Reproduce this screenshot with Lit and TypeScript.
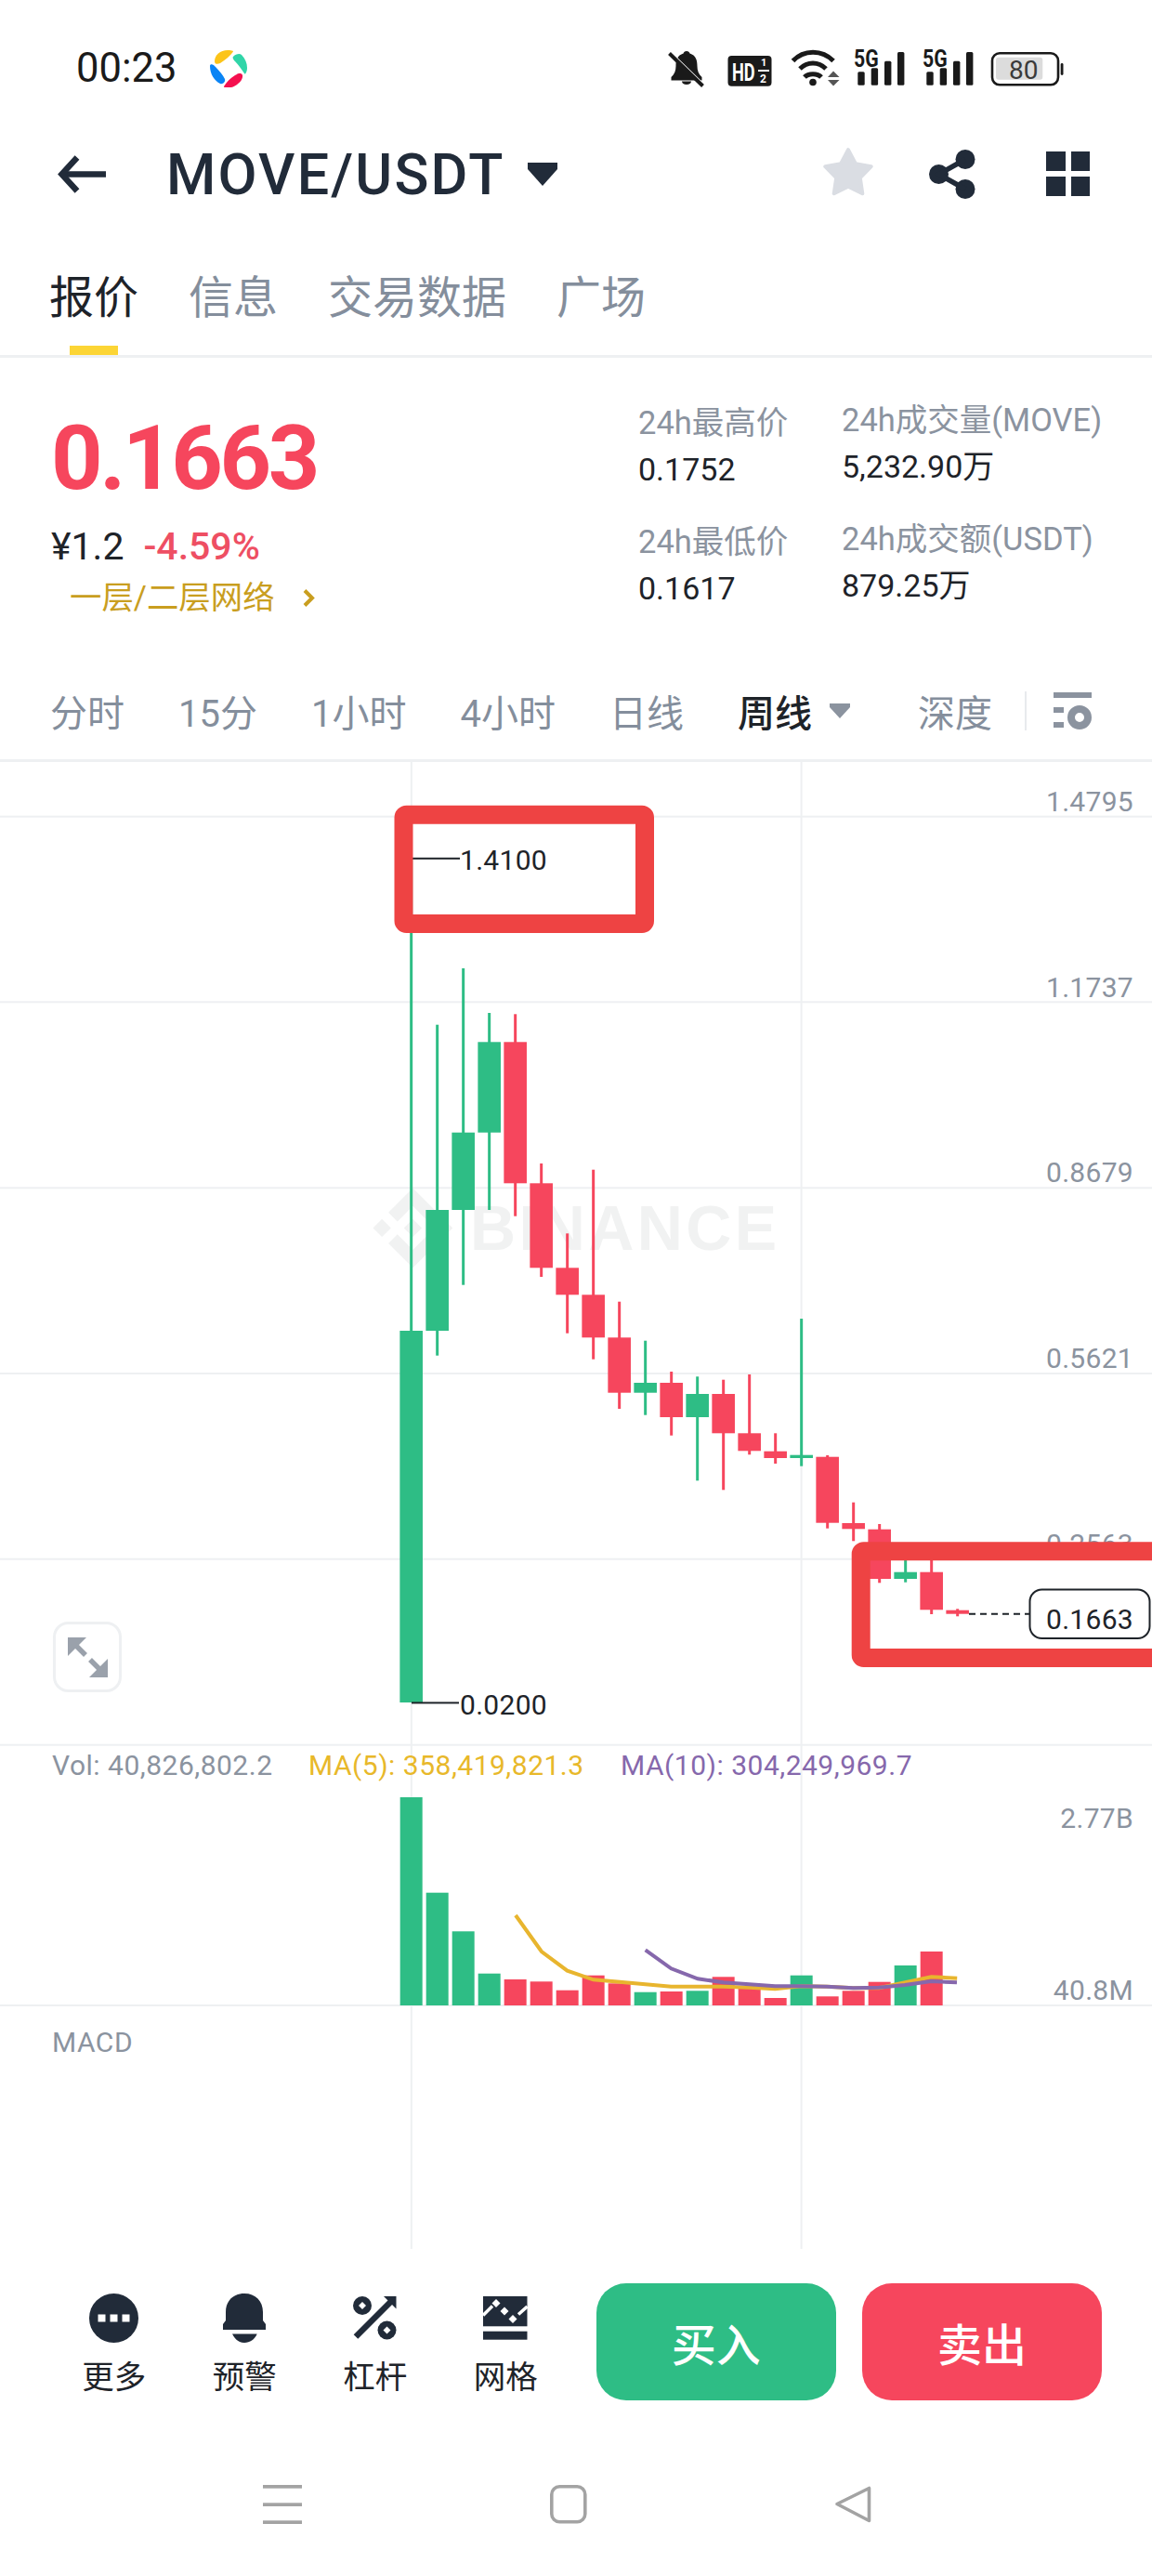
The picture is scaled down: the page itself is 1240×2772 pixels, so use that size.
import { LitElement, html, css, svg } from "lit";
import { customElement } from "lit/decorators.js";

const UP = "#2ebd85";
const DN = "#f6465d";
const GRID = "#eef0f2";
const INK = "#1e2329";

// [colour, high, low, bodyTop, bodyBottom]
const CANDLES: [string, number, number, number, number][] = [
  [UP, 924, 1832, 1432, 1832],
  [UP, 1102.7, 1458.7, 1302, 1432],
  [UP, 1042, 1382.7, 1218.7, 1302],
  [UP, 1090, 1302, 1121.3, 1218.7],
  [DN, 1091.3, 1308.7, 1121.3, 1273.3],
  [DN, 1252, 1374, 1273.3, 1364.3],
  [DN, 1327.3, 1434.7, 1364.3, 1393.3],
  [DN, 1258.7, 1462.7, 1393.3, 1439.3],
  [DN, 1400.7, 1516, 1439.3, 1498.7],
  [UP, 1442.7, 1522.7, 1488, 1498.7],
  [DN, 1476, 1544.7, 1488, 1525],
  [UP, 1481.3, 1593.3, 1500, 1525],
  [DN, 1484.7, 1603.3, 1500, 1542.3],
  [DN, 1479, 1565.3, 1542.3, 1561.3],
  [DN, 1542.3, 1575, 1561.7, 1569],
  [UP, 1419, 1577.7, 1565.7, 1569],
  [DN, 1566, 1644.7, 1567.7, 1638.7],
  [DN, 1616.7, 1658.3, 1639, 1645.3],
  [DN, 1640, 1703.3, 1645.7, 1699],
  [UP, 1676, 1702.7, 1691.7, 1699],
  [DN, 1676, 1737, 1691.7, 1732.3],
  [DN, 1731.3, 1739.3, 1732.7, 1736.7],
];

const VOLUMES: [string, number][] = [
  [UP, 1934], [UP, 2036.7], [UP, 2078.3], [UP, 2123.7], [DN, 2130], [DN, 2132.3], [DN, 2141.7],
  [DN, 2125.7], [DN, 2134.3], [UP, 2143.7], [DN, 2143], [UP, 2142.3], [DN, 2127.3], [DN, 2139.3],
  [DN, 2150], [UP, 2125.7], [DN, 2148.3], [DN, 2142.3], [DN, 2132.7], [UP, 2115], [DN, 2100],
];

const MA5 = "555,2061 582.9,2100 610.6,2120.7 638.8,2130.3 667,2132.7 694.7,2135.3 722.4,2137.7 751,2137.7 778.8,2137.7 806.5,2138.7 834.3,2140.3 862.4,2137.3 890.2,2137.7 918.4,2139.3 946.1,2139.3 974.3,2133.3 1002.4,2127.3 1030.2,2128.7";
const MA10 = "694.7,2098.3 722.4,2118.3 751,2129.3 778.8,2133.3 806.5,2135.3 834.3,2137.3 862.4,2137.3 890,2137.7 918.4,2139.3 946,2138.7 974,2136 1002.4,2132 1030,2133.3";

const HLINES = [878.7, 1078.3, 1278.3, 1478, 1677.7, 1877.7, 2158];
const AXIS: [string, number][] = [
  ["1.4795", 862], ["1.1737", 1062], ["0.8679", 1261], ["0.5621", 1461], ["0.2563", 1661],
  ["2.77B", 1956], ["40.8M", 2141],
];
const cx = (i: number) => 442.67 + 28 * i;

const starPoints = () => {
  const pts: string[] = [];
  for (let i = 0; i < 10; i++) {
    const r = i % 2 ? 13.5 : 26;
    const a = -Math.PI / 2 + (i * Math.PI) / 5;
    pts.push(`${(28 + r * Math.cos(a)).toFixed(1)},${(28.2 + r * Math.sin(a)).toFixed(1)}`);
  }
  return pts.join(" ");
};

@customElement("app-root")
export class AppRoot extends LitElement {
  static styles = css`
    :host {
      display: block;
      width: 1240px;
      height: 2772px;
      background: #fff;
      overflow: hidden;
      font-family: Roboto, "Noto Sans CJK SC", sans-serif;
      color: #1e2329;
    }
    svg { display: block; flex: none; }

    .status { height: 148px; display: flex; align-items: center; padding-left: 82px; }
    .time { font-size: 43.5px; color: #1a1a1a; line-height: 50px; width: 144px; }
    .status-icons { margin-left: 450px; }
    .s-white { font-family: Roboto, sans-serif; font-weight: 700; fill: #fff; }
    .s-dark { font-family: Roboto, sans-serif; font-weight: 700; fill: #1a1a1a; }
    .s-batt { font-family: Roboto, sans-serif; font-size: 28px; fill: #3a3a3a; }

    .header { height: 78px; display: flex; align-items: center; padding-left: 62px; }
    .title { font-size: 61px; font-weight: 500; line-height: 78px; letter-spacing: 2.2px; color: #212b39; margin-left: 65px; padding-top: 2px; width: 380px; }
    .caret { margin-left: 9px; }
    .star { margin-left: 285px; }
    .share { margin-left: 59px; }
    .apps { margin-left: 76px; display: grid; grid-template-columns: 20.7px 20.7px; grid-auto-rows: 20.7px; gap: 6px; }
    .apps i { background: #212b39; display: block; }

    .tabs { height: 159px; box-sizing: border-box; border-bottom: 3px solid #eef0f2; display: flex; gap: 54px; padding: 67px 0 0 53px; }
    .tab { display: flex; flex-direction: column; align-items: center; font-size: 48px; line-height: 56px; color: #848e9c; }
    .tab.on { color: #1e2329; }
    .mark { width: 52px; height: 10px; margin-top: 23px; }
    .tab.on .mark { background: #fcd535; }

    .stats { height: 331px; display: flex; }
    .left { width: 687px; box-sizing: border-box; padding: 58px 0 0 55px; }
    .price { font-size: 97px; line-height: 100px; font-weight: 700; color: #f6465d; letter-spacing: -3.4px; }
    .sub { display: flex; gap: 21px; margin-top: 21px; font-size: 41px; line-height: 48px; }
    .sub .pct { color: #ee4f63; font-weight: 500; }
    .net { display: flex; align-items: center; margin: 9px 0 0 20px; font-size: 34.4px; line-height: 44px; color: #c99e1f; }
    .net svg { margin-left: 29px; }
    .col { display: flex; flex-direction: column; }
    .col1 { width: 219px; padding-top: 47px; }
    .col2 { padding-top: 43.5px; }
    .lbl { font-size: 34.5px; line-height: 46px; color: #8b939f; white-space: nowrap; }
    .val { font-size: 34px; line-height: 44px; margin-top: 5px; color: #1e2329; white-space: nowrap; }
    .lbl.next { margin-top: 33px; }

    .ranges { height: 104px; box-sizing: border-box; border-bottom: 3px solid #eef0f2; display: flex; align-items: center; padding: 0 0 3px 54px; font-size: 40px; color: #848e9c; }
    .ranges span { margin-right: 58px; white-space: nowrap; }
    .ranges .on { color: #1e2329; font-weight: 500; margin-right: 19px; }
    .ranges .depth { margin: 0 0 0 73px; }
    .ranges .div { width: 2px; height: 42px; background: #e8eaed; margin: 0 29px 0 35px; }

    .axis { font-family: Roboto, sans-serif; font-size: 30px; letter-spacing: 0.3px; fill: #8b939f; text-anchor: end; dominant-baseline: central; }
    .mark-text { font-family: Roboto, sans-serif; font-size: 30px; letter-spacing: 0.3px; fill: #1e2329; dominant-baseline: central; }
    .legend { font-family: Roboto, sans-serif; font-size: 30px; letter-spacing: 0.5px; dominant-baseline: central; }
    .wm { font-family: "Liberation Sans", sans-serif; font-weight: 700; font-size: 68px; fill: #f1f2f2; }

    .footer { height: 200px; display: flex; box-sizing: border-box; padding: 36.7px 0 0 52.5px; }
    .tools { display: flex; width: 589px; }
    .tool { width: 140.5px; display: flex; flex-direction: column; align-items: center; padding-top: 11.5px; }
    .tool-icon { height: 53px; display: flex; align-items: center; justify-content: center; }
    .tool span { font-size: 34.5px; line-height: 44px; margin-top: 15px; color: #1e2329; }
    .btn { width: 258.6px; height: 126px; border-radius: 32px; color: #fff; font-size: 48px; font-weight: 500; display: flex; align-items: center; justify-content: center; }
    .buy { background: #2ebd85; }
    .sell { background: #f6465d; margin-left: 27.6px; }

    .nav { display: flex; padding: 54px 0 0 283px; gap: 266.5px; }
  `;

  private chart() {
    return html`<svg width="1240" height="1600" viewBox="0 820 1240 1600">
      ${HLINES.map((y) => svg`<rect x="0" y=${y - 1} width="1240" height="2" fill=${GRID}></rect>`)}
      <rect x="441.8" y="820" width="2" height="1600" fill=${GRID}></rect>
      <rect x="861.6" y="820" width="2" height="1600" fill=${GRID}></rect>

      <g fill="#f1f2f2" transform="translate(401.5 1278.5) scale(2.68)">
        <path d="M9.8 13.4 16 7.2l6.2 6.2 3.6-3.6L16 0 6.2 9.8l3.6 3.6zM0 16l3.6-3.6L7.2 16l-3.6 3.6L0 16zm9.8 2.6L16 24.8l6.2-6.2 3.6 3.6L16 32l-9.8-9.8 3.6-3.6zm15-2.6 3.6-3.6L32 16l-3.6 3.6-3.6-3.6zM19.6 16 16 12.4 12.4 16 16 19.6 19.6 16z"></path>
      </g>
      <text class="wm" x="506" y="1345" textLength="330">BINANCE</text>

      ${AXIS.map(([t, y]) => svg`<text class="axis" x="1220" y=${y}>${t}</text>`)}

      ${CANDLES.map(([c, hi, lo, top, bot], i) => svg`
        <rect x=${cx(i) - 1.5} y=${hi} width="3" height=${lo - hi} fill=${c}></rect>
        <rect x=${cx(i) - 12.3} y=${top} width="24.6" height=${bot - top} fill=${c}></rect>`)}

      <rect x="444" y="922.8" width="51" height="2" fill=${INK}></rect>
      <text class="mark-text" x="495" y="925.5">1.4100</text>
      <rect x="443" y="1831.4" width="51" height="2" fill=${INK}></rect>
      <text class="mark-text" x="495" y="1834.5">0.0200</text>

      <line x1="1043" y1="1736.7" x2="1108" y2="1736.7" stroke=${INK} stroke-width="2" stroke-dasharray="7 5"></line>
      <rect x="1108.5" y="1710.5" width="129" height="52.5" rx="13" fill="#fff" stroke=${INK} stroke-width="2"></rect>
      <text class="mark-text" x="1126" y="1742">0.1663</text>

      <rect x="58.5" y="1746.5" width="71" height="73" rx="15" fill="#fff" stroke=${GRID} stroke-width="3"></rect>
      <g fill="#9aa1ab" stroke="none">
        <polygon points="73,1762 93,1762 73,1782"></polygon>
        <polygon points="116,1805 96,1805 116,1785"></polygon>
      </g>
      <g stroke="#9aa1ab" stroke-width="5.5">
        <line x1="79" y1="1768" x2="92" y2="1781"></line>
        <line x1="110" y1="1799" x2="97" y2="1786"></line>
      </g>

      <text class="legend" x="56" y="1899.5" fill="#8b939f">Vol: 40,826,802.2</text>
      <text class="legend" x="332" y="1899.5" fill="#e8b82a">MA(5): 358,419,821.3</text>
      <text class="legend" x="668" y="1899.5" fill="#8668ac">MA(10): 304,249,969.7</text>
      <text class="legend" x="56" y="2197" fill="#8b939f">MACD</text>

      ${VOLUMES.map(([c, top], i) => svg`<rect x=${cx(i) - 12} y=${top} width="24" height=${2158 - top} fill=${c}></rect>`)}
      <polyline points=${MA5} fill="none" stroke="#e8b52e" stroke-width="4"></polyline>
      <polyline points=${MA10} fill="none" stroke="#8668ac" stroke-width="4"></polyline>

      <rect x="434.5" y="876.7" width="259.5" height="117.3" rx="3" fill="none" stroke="#ee4343" stroke-width="20"></rect>
      <rect x="926.7" y="1669.3" width="340" height="114.7" rx="3" fill="none" stroke="#ee4343" stroke-width="20"></rect>
    </svg>`;
  }

  render() {
    return html`
      <div class="status">
        <div class="time">00:23</div>
        <svg width="40" height="40" viewBox="0 0 40 40">
          <path fill="#fcc419" d="M5 12C5 5 11 0 19 0C22 0 25 .5 25 1.5C22 6 17 10 11 14C8 15.5 5 15 5 12Z"></path>
          <path fill="#30d5a8" d="M25 7C28 4 32 3 34 5C38 9 40 14 40 19C40 23 38 27 37 25C34 21 31 16 27 12C25 10 24 8 25 7Z"></path>
          <path fill="#0a84f5" d="M0 17C0 14 4 15 6 18C10 22 14 27 16 31C17 34 14 37 11 36C5 33 0 26 0 17Z"></path>
          <path fill="#f5104f" d="M15 39C18 34 22 30 27 27C30 25 34 24 35 27C36 32 30 38 23 40C19 40.5 14.5 40.5 15 39Z"></path>
        </svg>
        <svg class="status-icons" width="436" height="50" viewBox="716 49 436 50">
          <path fill="#1a1a1a" d="M739 55c-2 0-3 1-3.4 2.6C729 59.5 727.5 65 727.5 71c0 5-1.5 9-5 12v3.5h33V83c-3.5-3-5-7-5-12 0-6-1.5-11.5-8-13.4C742 56 741 55 739 55z"></path>
          <path fill="#1a1a1a" d="M734 87.5h10c0 2-2 3.5-5 3.5s-5-1.5-5-3.5z"></path>
          <line x1="718" y1="54" x2="755" y2="90" stroke="#fff" stroke-width="4"></line>
          <line x1="720.5" y1="57.5" x2="756.5" y2="92.5" stroke="#1a1a1a" stroke-width="4"></line>

          <rect x="783.5" y="60" width="47" height="32.7" rx="4" fill="#1a1a1a"></rect>
          <text class="s-white" font-size="26" transform="translate(788 86.5) scale(0.7 1)">HD</text>
          <text class="s-white" x="819" y="71" font-size="11">1</text>
          <rect x="816" y="75" width="12" height="2" fill="#fff"></rect>
          <text class="s-white" x="818" y="88.5" font-size="12">2</text>

          <g fill="none" stroke="#1a1a1a" stroke-width="5">
            <path d="M853.5 65.5C865 53 885 53 897 65.5"></path>
            <path d="M861 74C869 66 881 66 889 74"></path>
            <path d="M866 83C870 78.5 880 78.5 884 83"></path>
          </g>
          <circle cx="875" cy="88.5" r="3.8" fill="#1a1a1a"></circle>
          <polygon points="897,76.5 903.5,83 891,83" fill="#555"></polygon>
          <polygon points="891,86 903.5,86 897,92.5" fill="#555"></polygon>

          ${[0, 74].map((dx) => svg`
            <text class="s-dark" font-size="25" transform="translate(${919 + dx} 72) scale(0.85 1)">5G</text>
            <rect x=${923.3 + dx} y="77.3" width="7.4" height="14.4" rx="1.5" fill="#1a1a1a"></rect>
            <rect x=${937.7 + dx} y="73.3" width="7.4" height="18.4" rx="1.5" fill="#1a1a1a"></rect>
            <rect x=${952 + dx} y="65.7" width="7.4" height="26" rx="1.5" fill="#1a1a1a"></rect>
            <rect x=${966 + dx} y="56" width="7.4" height="35.7" rx="1.5" fill="#1a1a1a"></rect>`)}

          <rect x="1068" y="57.3" width="71" height="34" rx="8" fill="none" stroke="#1a1a1a" stroke-width="2.6"></rect>
          <rect x="1072" y="61.7" width="50.3" height="24" rx="3" fill="#dcdcdc"></rect>
          <text class="s-batt" x="1086" y="85">80</text>
          <rect x="1141.7" y="68" width="2.8" height="13" rx="1.4" fill="#1a1a1a"></rect>
        </svg>
      </div>

      <div class="header">
        <svg width="52" height="41" viewBox="0 0 52 41" fill="none" stroke="#212b39" stroke-width="6.5">
          <path d="M52 20.5H5"></path>
          <path d="M21 2.5L4.5 20.5L21 38.5"></path>
        </svg>
        <div class="title">MOVE/USDT</div>
        <svg class="caret" width="32" height="25" viewBox="0 0 32 25"><path fill="#212b39" d="M0 0H32V7L16 25L0 7Z"></path></svg>
        <svg class="star" width="56" height="56" viewBox="0 0 56 56"><polygon points=${starPoints()} fill="#dadde3" stroke="#dadde3" stroke-width="4" stroke-linejoin="round"></polygon></svg>
        <svg class="share" width="50" height="53" viewBox="0 0 50 53" fill="#212b39">
          <circle cx="39" cy="10.5" r="10.5"></circle>
          <circle cx="10.5" cy="26.5" r="10.5"></circle>
          <circle cx="39" cy="42.5" r="10.5"></circle>
          <path d="M39 10.5L10.5 26.5L39 42.5" fill="none" stroke="#212b39" stroke-width="5.5"></path>
        </svg>
        <div class="apps"><i></i><i></i><i></i><i></i></div>
      </div>

      <div class="tabs">
        <div class="tab on">报价<div class="mark"></div></div>
        <div class="tab">信息<div class="mark"></div></div>
        <div class="tab">交易数据<div class="mark"></div></div>
        <div class="tab">广场<div class="mark"></div></div>
      </div>

      <div class="stats">
        <div class="left">
          <div class="price">0.1663</div>
          <div class="sub"><div>¥1.2</div><div class="pct">-4.59%</div></div>
          <div class="net">一层/二层网络
            <svg width="14" height="19" viewBox="0 0 14 19" fill="none" stroke="#c99e1f" stroke-width="4"><path d="M3 1.5L11 9.5L3 17.5"></path></svg>
          </div>
        </div>
        <div class="col col1">
          <div class="lbl">24h最高价</div>
          <div class="val">0.1752</div>
          <div class="lbl next">24h最低价</div>
          <div class="val">0.1617</div>
        </div>
        <div class="col col2">
          <div class="lbl">24h成交量(MOVE)</div>
          <div class="val">5,232.90万</div>
          <div class="lbl next">24h成交额(USDT)</div>
          <div class="val">879.25万</div>
        </div>
      </div>

      <div class="ranges">
        <span>分时</span><span>15分</span><span>1小时</span><span>4小时</span><span>日线</span><span class="on">周线</span>
        <svg width="22" height="16" viewBox="0 0 22 16"><path fill="#8b939f" d="M0 0H22V4L11 16L0 4Z"></path></svg>
        <span class="depth">深度</span>
        <div class="div"></div>
        <svg width="41" height="40" viewBox="0 0 41 40" fill="#8b939f">
          <rect width="41" height="6"></rect>
          <rect y="16" width="11" height="6"></rect>
          <rect y="32" width="11" height="6"></rect>
          <circle cx="28" cy="27" r="9" fill="none" stroke="#8b939f" stroke-width="8"></circle>
        </svg>
      </div>

      ${this.chart()}

      <div class="footer">
        <div class="tools">
          <div class="tool">
            <div class="tool-icon"><svg width="53" height="53" viewBox="0 0 53 53">
              <circle cx="26.5" cy="26.5" r="26.5" fill="#212b39"></circle>
              <rect x="9.5" y="22.5" width="8" height="8" fill="#fff"></rect>
              <rect x="22.5" y="22.5" width="8" height="8" fill="#fff"></rect>
              <rect x="35.5" y="22.5" width="8" height="8" fill="#fff"></rect>
            </svg></div>
            <span>更多</span>
          </div>
          <div class="tool">
            <div class="tool-icon"><svg width="46" height="53" viewBox="0 0 46 53" fill="#212b39">
              <path d="M23 0C11 0 3 8 3 20V29L0 33V39H46V33L43 29V20C43 8 35 0 23 0Z"></path>
              <path d="M10 43.5H36.7C34 49.5 29 53 23 53C17 53 13 49.5 10 43.5Z"></path>
            </svg></div>
            <span>预警</span>
          </div>
          <div class="tool">
            <div class="tool-icon"><svg width="47" height="47" viewBox="0 0 47 47" fill="#212b39">
              <path d="M3 43.5L42 4.5" stroke="#212b39" stroke-width="6.5" fill="none"></path>
              <polygon points="33,0 46.5,0 46.5,13.5"></polygon>
              <circle cx="10" cy="10" r="10"></circle>
              <polygon points="10,6 14,10 10,14 6,10" fill="#fff"></polygon>
              <circle cx="36.5" cy="36.5" r="10"></circle>
              <polygon points="36.5,32.5 40.5,36.5 36.5,40.5 32.5,36.5" fill="#fff"></polygon>
            </svg></div>
            <span>杠杆</span>
          </div>
          <div class="tool">
            <div class="tool-icon"><svg width="48" height="47" viewBox="0 0 48 47" fill="#212b39">
              <rect width="47.5" height="32.3"></rect>
              <rect y="37.7" width="47.5" height="9"></rect>
              <path d="M0 20.5L10 10.5M38 19.5L47.5 11" stroke="#fff" stroke-width="3.5" fill="none"></path>
              <g fill="#fff">
                <polygon points="14,3 18.5,7.5 14,12 9.5,7.5"></polygon>
                <polygon points="23,11.5 27.5,16 23,20.5 18.5,16"></polygon>
                <polygon points="32,20 36.5,24.5 32,29 27.5,24.5"></polygon>
              </g>
            </svg></div>
            <span>网格</span>
          </div>
        </div>
        <div class="btn buy">买入</div>
        <div class="btn sell">卖出</div>
      </div>

      <div class="nav">
        <svg width="42" height="42" viewBox="0 0 42 42" fill="#a3a3a3">
          <rect width="42" height="3.7"></rect>
          <rect y="19.3" width="42" height="3.7"></rect>
          <rect y="38.3" width="42" height="3.7"></rect>
        </svg>
        <svg width="40" height="42" viewBox="0 0 40 42"><rect x="1.8" y="1.8" width="36" height="38" rx="8.5" fill="none" stroke="#a3a3a3" stroke-width="3.6"></rect></svg>
        <svg width="40" height="42" viewBox="0 0 40 42"><path d="M37.5 3.5V38.5L3 20.5Z" fill="none" stroke="#a3a3a3" stroke-width="3.6" stroke-linejoin="round"></path></svg>
      </div>
    `;
  }
}
